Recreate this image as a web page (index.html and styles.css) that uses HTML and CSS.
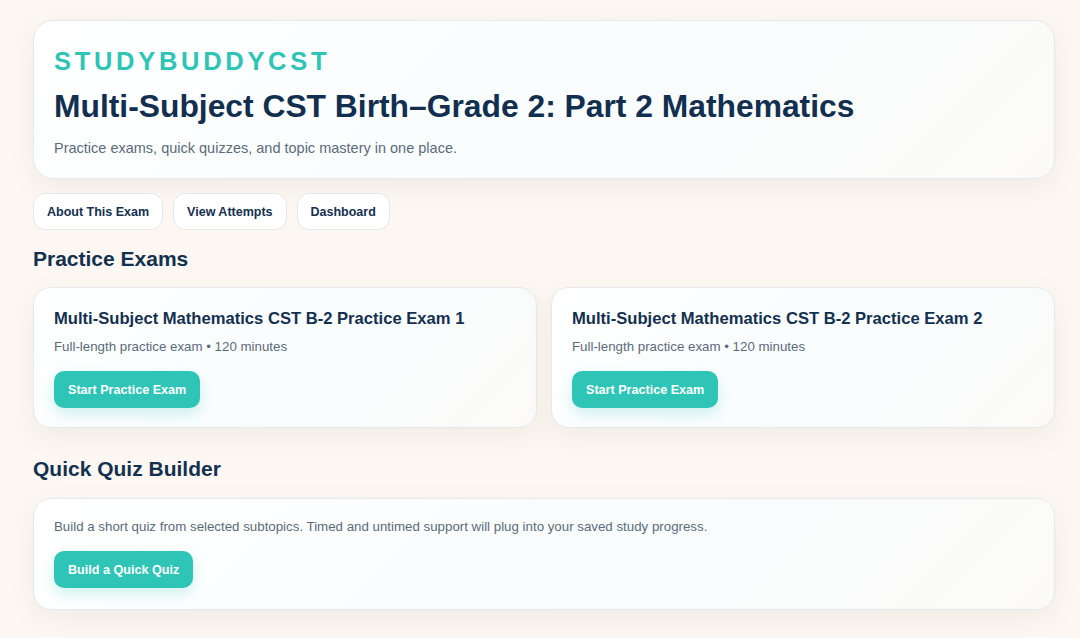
FILE: index.html
```html
<!DOCTYPE html>
<html lang="en">
<head>
<meta charset="utf-8">
<title>StudyBuddyCST</title>
<link rel="stylesheet" href="styles.css">
</head>
<body>
<main class="page">
  <header class="hero card">
    <div class="brand">STUDYBUDDYCST</div>
    <h1 class="title">Multi-Subject CST Birth–Grade 2: Part 2 Mathematics</h1>
    <p class="lead">Practice exams, quick quizzes, and topic mastery in one place.</p>
  </header>

  <nav class="nav">
    <a class="pill" href="#">About This Exam</a>
    <a class="pill" href="#">View Attempts</a>
    <a class="pill" href="#">Dashboard</a>
  </nav>

  <h2 class="section-title">Practice Exams</h2>
  <section class="grid">
    <article class="card exam">
      <h3 class="exam-title">Multi-Subject Mathematics CST B-2 Practice Exam 1</h3>
      <p class="meta">Full-length practice exam • 120 minutes</p>
      <a class="btn" href="#">Start Practice Exam</a>
    </article>
    <article class="card exam">
      <h3 class="exam-title">Multi-Subject Mathematics CST B-2 Practice Exam 2</h3>
      <p class="meta">Full-length practice exam • 120 minutes</p>
      <a class="btn" href="#">Start Practice Exam</a>
    </article>
  </section>

  <h2 class="section-title">Quick Quiz Builder</h2>
  <section class="card quiz">
    <p class="meta">Build a short quiz from selected subtopics. Timed and untimed support will plug into your saved study progress.</p>
    <a class="btn" href="#">Build a Quick Quiz</a>
  </section>
</main>
</body>
</html>
```

FILE: styles.css
```css
* { box-sizing: border-box; }
html, body { margin: 0; padding: 0; }
body {
  background: #fcf7f2;
  font-family: "Liberation Sans", Arial, sans-serif;
  color: #14304f;
}
.page {
  padding: 20px 25px 30px 33px;
  display: flex;
  flex-direction: column;
}
.card {
  background: linear-gradient(135deg, #ffffff 0%, #f8fcfd 60%, #fbfaf7 100%);
  border: 1px solid #e4eaec;
  border-radius: 20px;
  box-shadow: 0 8px 24px rgba(120, 100, 80, 0.08);
}
.hero {
  padding: 25px 20px 22px 20px;
  height: 159px;
}
.brand {
  color: #2ec4b6;
  font-weight: 700;
  font-size: 25.5px;
  letter-spacing: 3.7px;
  line-height: 30px;
}
.title {
  margin: 10px 0 0 0;
  font-size: 31.8px;
  line-height: 40px;
  font-weight: 700;
  color: #122f4f;
}
.lead {
  margin: 12px 0 0 0;
  font-size: 14.5px;
  line-height: 20px;
  color: #5a6b7c;
}
.nav {
  display: flex;
  gap: 10px;
  margin-top: 14px;
}
.pill {
  display: inline-flex;
  align-items: center;
  height: 37px;
  padding: 0 13px;
  background: #ffffff;
  border: 1px solid #e4e8ea;
  border-radius: 12px;
  color: #14304f;
  font-weight: 700;
  font-size: 12.5px;
  text-decoration: none;
}
.section-title {
  margin: 17px 0 0 0;
  font-size: 21px;
  line-height: 24px;
  font-weight: 700;
  color: #14304f;
}
.grid {
  display: grid;
  grid-template-columns: 1fr 1fr;
  gap: 14px;
  margin-top: 16px;
  margin-bottom: 12px;
}
.exam {
  height: 141px;
  padding: 21px 20px 20px 20px;
  border-radius: 18px;
}
.exam-title {
  margin: 0;
  font-size: 16.6px;
  line-height: 20px;
  font-weight: 700;
  color: #14304f;
}
.meta {
  margin: 9px 0 0 0;
  font-size: 13.3px;
  line-height: 18px;
  color: #5a6b7c;
}
.btn {
  display: inline-flex;
  align-items: center;
  height: 37px;
  padding: 0 14px;
  margin-top: 15px;
  background: #2ec4b6;
  color: #ffffff;
  font-weight: 700;
  font-size: 12.6px;
  border-radius: 10px;
  text-decoration: none;
  box-shadow: 0 6px 14px rgba(46, 196, 182, 0.22);
}
.quiz {
  margin-top: 17px;
  height: 112px;
  padding: 10px 20px 20px 20px;
  border-radius: 18px;
}
.quiz .meta { margin-top: 9px; }
.quiz .btn { margin-top: 15px; }
```
